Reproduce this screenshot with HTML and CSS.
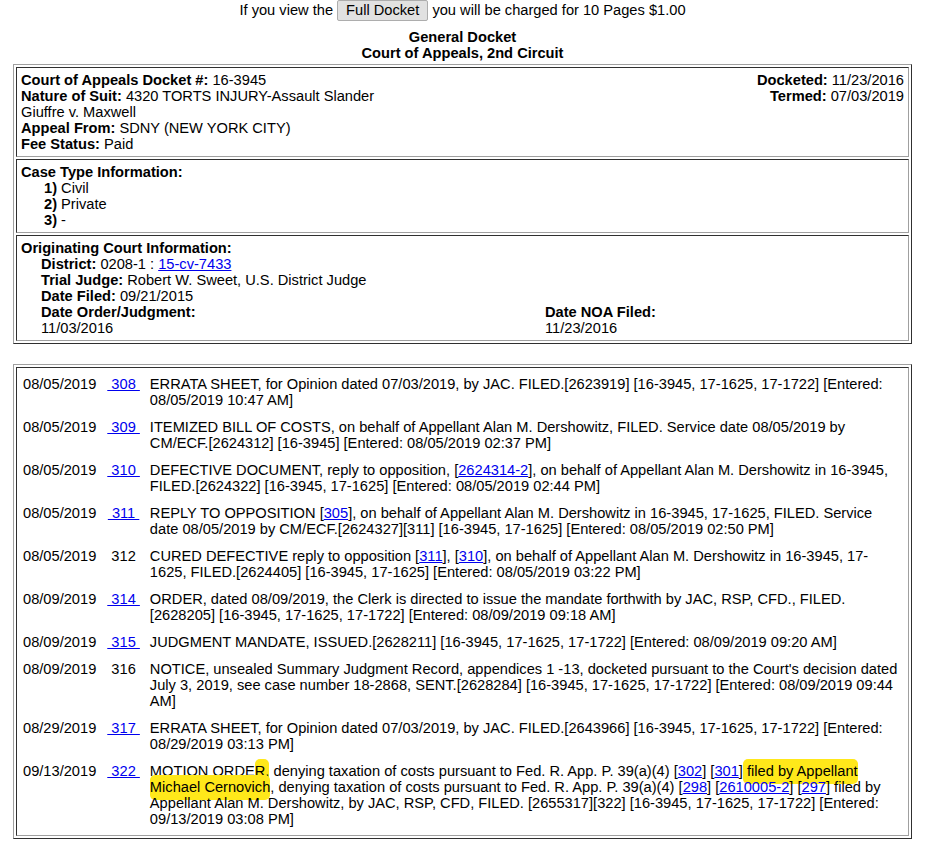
FILE: index.html
```html
<!DOCTYPE html>
<html>
<head>
<meta charset="utf-8">
<title>General Docket</title>
<link rel="stylesheet" href="styles.css">
</head>
<body>
<div class="charge">If you view the <button class="btn" type="button">Full Docket</button> you will be charged for 10 Pages $1.00</div>
<div class="title">General Docket<br>Court of Appeals, 2nd Circuit</div>

<table class="box">
  <tr>
    <td>
      <div class="split">
        <div>
          <b>Court of Appeals Docket #:</b> 16-3945<br>
          <b>Nature of Suit:</b> 4320 TORTS INJURY-Assault Slander<br>
          Giuffre v. Maxwell<br>
          <b>Appeal From:</b> SDNY (NEW YORK CITY)<br>
          <b>Fee Status:</b> Paid
        </div>
        <div class="right">
          <b>Docketed:</b> 11/23/2016<br>
          <b>Termed:</b> 07/03/2019
        </div>
      </div>
    </td>
  </tr>
  <tr>
    <td>
      <b>Case Type Information:</b>
      <div class="case-list">
        <b>1)</b> Civil<br>
        <b>2)</b> Private<br>
        <b>3)</b> -
      </div>
    </td>
  </tr>
  <tr>
    <td>
      <b>Originating Court Information:</b>
      <div class="orig">
        <b>District:</b> 0208-1 : <a href="#">15-cv-7433</a><br>
        <b>Trial Judge:</b> Robert W. Sweet, U.S. District Judge<br>
        <b>Date Filed:</b> 09/21/2015
        <div class="dates">
          <div><b>Date Order/Judgment:</b><br>11/03/2016</div>
          <div><b>Date NOA Filed:</b><br>11/23/2016</div>
        </div>
      </div>
    </td>
  </tr>
</table>

<table class="box log">
  <tr>
    <td>
      <table class="entries">
        <tr>
          <td class="date">08/05/2019</td>
          <td class="num"><a href="#">&nbsp;308&nbsp;</a></td>
          <td class="desc">ERRATA SHEET, for Opinion dated 07/03/2019, by JAC. FILED.[2623919] [16-3945, 17-1625, 17-1722] [Entered: 08/05/2019 10:47 AM]</td>
        </tr>
        <tr>
          <td class="date">08/05/2019</td>
          <td class="num"><a href="#">&nbsp;309&nbsp;</a></td>
          <td class="desc">ITEMIZED BILL OF COSTS, on behalf of Appellant Alan M. Dershowitz, FILED. Service date 08/05/2019 by CM/ECF.[2624312] [16-3945] [Entered: 08/05/2019 02:37 PM]</td>
        </tr>
        <tr>
          <td class="date">08/05/2019</td>
          <td class="num"><a href="#">&nbsp;310&nbsp;</a></td>
          <td class="desc">DEFECTIVE DOCUMENT, reply to opposition, [<a href="#">2624314-2</a>], on behalf of Appellant Alan M. Dershowitz in 16-3945, FILED.[2624322] [16-3945, 17-1625] [Entered: 08/05/2019 02:44 PM]</td>
        </tr>
        <tr>
          <td class="date">08/05/2019</td>
          <td class="num"><a href="#">&nbsp;311&nbsp;</a></td>
          <td class="desc">REPLY TO OPPOSITION [<a href="#">305</a>], on behalf of Appellant Alan M. Dershowitz in 16-3945, 17-1625, FILED. Service date 08/05/2019 by CM/ECF.[2624327][311] [16-3945, 17-1625] [Entered: 08/05/2019 02:50 PM]</td>
        </tr>
        <tr>
          <td class="date">08/05/2019</td>
          <td class="num">312</td>
          <td class="desc">CURED DEFECTIVE reply to opposition [<a href="#">311</a>], [<a href="#">310</a>], on behalf of Appellant Alan M. Dershowitz in 16-3945, 17-1625, FILED.[2624405] [16-3945, 17-1625] [Entered: 08/05/2019 03:22 PM]</td>
        </tr>
        <tr>
          <td class="date">08/09/2019</td>
          <td class="num"><a href="#">&nbsp;314&nbsp;</a></td>
          <td class="desc">ORDER, dated 08/09/2019, the Clerk is directed to issue the mandate forthwith by JAC, RSP, CFD., FILED.<wbr>[2628205] [16-3945, 17-1625, 17-1722] [Entered: 08/09/2019 09:18 AM]</td>
        </tr>
        <tr>
          <td class="date">08/09/2019</td>
          <td class="num"><a href="#">&nbsp;315&nbsp;</a></td>
          <td class="desc">JUDGMENT MANDATE, ISSUED.[2628211] [16-3945, 17-1625, 17-1722] [Entered: 08/09/2019 09:20 AM]</td>
        </tr>
        <tr>
          <td class="date">08/09/2019</td>
          <td class="num">316</td>
          <td class="desc">NOTICE, unsealed Summary Judgment Record, appendices 1 -13, docketed pursuant to the Court's decision dated July 3, 2019, see case number 18-2868, SENT.[2628284] [16-3945, 17-1625, 17-1722] [Entered: 08/09/2019 09:44 AM]</td>
        </tr>
        <tr>
          <td class="date">08/29/2019</td>
          <td class="num"><a href="#">&nbsp;317&nbsp;</a></td>
          <td class="desc">ERRATA SHEET, for Opinion dated 07/03/2019, by JAC. FILED.[2643966] [16-3945, 17-1625, 17-1722] [Entered: 08/29/2019 03:13 PM]</td>
        </tr>
        <tr>
          <td class="date">09/13/2019</td>
          <td class="num"><a href="#">&nbsp;322&nbsp;</a></td>
          <td class="desc">MOTION ORDE<span class="hl">R,</span> denying taxation of costs pursuant to Fed. R. App. P. 39(a)(4) [<a href="#">302</a>] [<a href="#">301</a>]<span class="hl"> filed by Appellant</span> <span class="hl">Michael Cernovich</span>, denying taxation of costs pursuant to Fed. R. App. P. 39(a)(4) [<a href="#">298</a>] [<a href="#">2610005-2</a>] [<a href="#">297</a>] filed by Appellant Alan M. Dershowitz, by JAC, RSP, CFD, FILED. [2655317][322] [16-3945, 17-1625, 17-1722] [Entered: 09/13/2019 03:08 PM]</td>
        </tr>
      </table>
    </td>
  </tr>
</table>
</body>
</html>
```

FILE: styles.css
```css
html {
  background: #ffffff;
}

body {
  margin: 0 8px;
  font-family: "Liberation Sans", Arial, sans-serif;
  font-size: 14.65px;
  line-height: 16px;
  color: #000000;
}

a {
  color: #0000ee;
  text-decoration: underline;
}

.charge {
  text-align: center;
  height: 21px;
  line-height: 21px;
}

.btn {
  font: inherit;
  color: #000000;
  height: 21px;
  line-height: 19px;
  padding: 0 8px;
  margin: 0;
  border: 1px solid #adadad;
  border-radius: 2px;
  background: #e1e1e1;
  vertical-align: top;
}

.title {
  margin-top: 8px;
  text-align: center;
  font-weight: bold;
}

.box {
  width: 899px;
  margin: 3px auto 0;
  border-collapse: separate;
  border-spacing: 2px;
  border: 1px solid;
  border-color: #a0a0a0 #303030 #303030 #a0a0a0;
}

.box > tbody > tr > td {
  border: 1px solid;
  border-color: #303030 #a0a0a0 #a0a0a0 #303030;
  padding: 4px;
  vertical-align: top;
}

.split {
  display: flex;
  justify-content: space-between;
}

.right {
  text-align: right;
}

.case-list {
  padding-left: 23px;
}

.orig {
  padding-left: 20px;
}

.dates {
  display: grid;
  grid-template-columns: 504px 1fr;
}

.log {
  margin-top: 20px;
}

.log > tbody > tr > td {
  padding: 3px 0 2px;
}

.entries {
  width: 100%;
  border-collapse: separate;
  border-spacing: 0;
}

.entries td {
  padding: 5px 0 6px;
  vertical-align: top;
}

.entries .date {
  width: 1%;
  padding-left: 6px;
  padding-right: 11px;
  white-space: nowrap;
}

.entries .num {
  width: 1%;
  padding-right: 10px;
  text-align: center;
  white-space: nowrap;
}

.entries .desc {
  padding-right: 5px;
}

.hl {
  background: #ffe81a;
  padding: 4px 0 5px;
  border-radius: 5px;
  -webkit-box-decoration-break: clone;
  box-decoration-break: clone;
}
```
